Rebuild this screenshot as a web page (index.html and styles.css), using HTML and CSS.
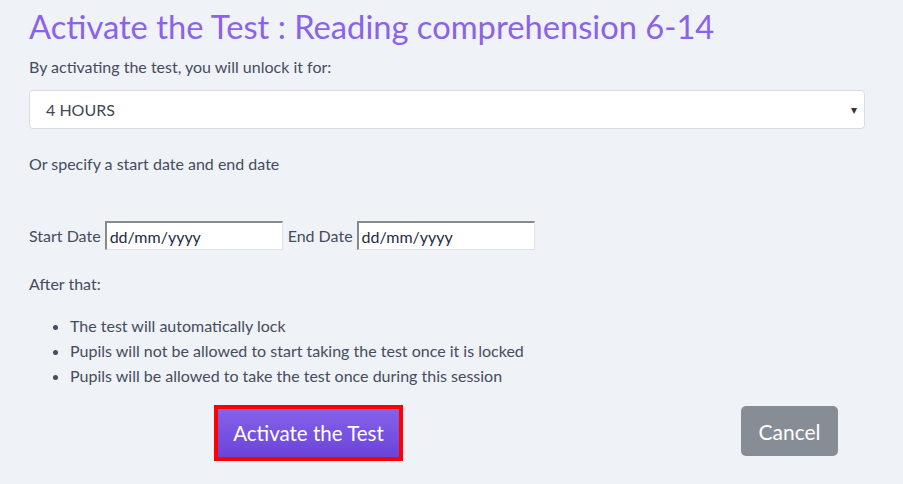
FILE: index.html
```html
<!DOCTYPE html>
<html>
<head>
<meta charset="utf-8">
<link rel="stylesheet" href="styles.css">
</head>
<body>
<div class="page">
  <h1 class="title">Activate the Test : Reading comprehension 6-14</h1>
  <p class="intro">By activating the test, you will unlock it for:</p>
  <div class="select">
    <span>4 HOURS</span>
    <span class="arrow">&#9662;</span>
  </div>
  <p class="or">Or specify a start date and end date</p>
  <div class="dates">
    <label>Start Date</label>
    <div class="date-input">dd/mm/yyyy</div>
    <label>End Date</label>
    <div class="date-input">dd/mm/yyyy</div>
  </div>
  <p class="after">After that:</p>
  <ul class="list">
    <li>The test will automatically lock</li>
    <li>Pupils will not be allowed to start taking the test once it is locked</li>
    <li>Pupils will be allowed to take the test once during this session</li>
  </ul>
  <div class="actions">
    <div class="highlight"><button class="btn-primary">Activate the Test</button></div>
    <button class="btn-cancel">Cancel</button>
  </div>
</div>
</body>
</html>
```
FILE: styles.css
```css
html, body {
  margin: 0;
  padding: 0;
  background: #eff2f6;
}
body {
  font-family: Lato, "Open Sans", sans-serif;
  color: #454c5e;
  font-size: 16px;
}
.page {
  padding: 8px 38px 0 29px;
}
.title {
  margin: 0;
  font-weight: 400;
  font-size: 32.7px;
  line-height: 38px;
  color: #8a63e9;
}
.intro {
  margin: 11px 0 0;
  line-height: 20px;
}
.select {
  margin-top: 13px;
  height: 37px;
  background: #fff;
  border: 1px solid #d8dce2;
  border-radius: 4px;
  display: flex;
  align-items: center;
  justify-content: space-between;
  padding: 0 7px 0 16px;
  font-size: 16px;
  color: #3f4654;
}
.arrow {
  font-size: 12px;
  color: #333;
}
.or {
  margin: 25px 0 0;
  line-height: 20px;
}
.dates {
  margin-top: 47px;
  display: flex;
  align-items: center;
  gap: 4px;
}
.date-input {
  width: 172px;
  height: 26px;
  background: #fff;
  border-top: 2px solid #8a8a8a;
  border-left: 2px solid #8a8a8a;
  border-right: 1px solid #e3e3e3;
  border-bottom: 1px solid #e3e3e3;
  display: flex;
  align-items: center;
  padding-left: 3px;
  color: #1f2a44;
  font-size: 16px;
  margin-right: 1px;
}
.after {
  margin: 24px 0 0;
  line-height: 20px;
}
.list {
  margin: 19px 0 0;
  padding-left: 41px;
  line-height: 25px;
}
.actions {
  margin-top: 17px;
  display: flex;
  justify-content: space-between;
  align-items: flex-start;
  padding-left: 185px;
  padding-right: 27px;
}
.highlight {
  border: 4px solid #ff0000;
}
.btn-primary {
  display: block;
  border: none;
  width: 181px;
  height: 48px;
  background: linear-gradient(#8662ea, #6b44d8);
  color: #fff;
  font-family: Lato, "Open Sans", sans-serif;
  font-size: 20.5px;
}
.btn-cancel {
  border: none;
  border-radius: 5px;
  width: 97px;
  height: 50px;
  margin-top: 1px;
  background: #878d95;
  color: #fff;
  font-family: Lato, "Open Sans", sans-serif;
  font-size: 21px;
}
```
